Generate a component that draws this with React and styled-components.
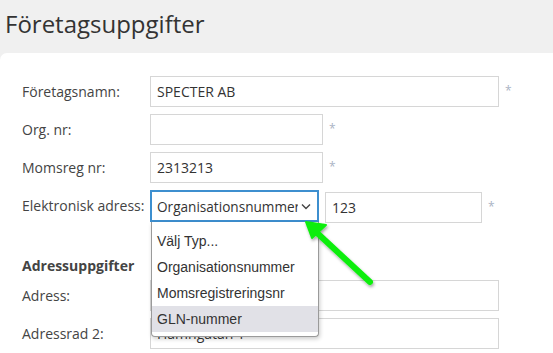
import React from 'react';
import styled, { createGlobalStyle } from 'styled-components';

const GlobalStyle = createGlobalStyle`
  html, body {
    margin: 0;
    padding: 0;
    background: #f0f0f0;
    font-family: "Open Sans", "Liberation Sans", sans-serif;
    overflow: hidden;
  }
`;

const Page = styled.div`
  width: 553px;
  height: 353px;
  overflow: hidden;
`;

const Title = styled.h1`
  margin: 0;
  height: 53px;
  padding: 7px 0 0 5px;
  box-sizing: border-box;
  font-size: 24px;
  font-weight: 400;
  line-height: 33px;
  color: #333;
`;

const Card = styled.section`
  position: relative;
  background: #fff;
  border-radius: 7px 0 0 0;
  padding: 23px 0 0 22px;
  height: 300px;
  box-sizing: border-box;
`;

const Row = styled.div`
  display: flex;
  align-items: ${(p) => (p.$top ? 'flex-start' : 'center')};
  margin-bottom: 7px;
`;

const Label = styled.label`
  width: 128px;
  flex: none;
  font-size: 14px;
  color: #444;
  line-height: 31px;
`;

const Input = styled.input`
  box-sizing: border-box;
  width: ${(p) => p.$w}px;
  height: 31px;
  margin-top: ${(p) => p.$mt || 0}px;
  margin-left: ${(p) => p.$ml || 0}px;
  border: 1px solid #d6d6d6;
  padding: 0 6px;
  font-family: "Open Sans", "Liberation Sans", sans-serif;
  font-size: 14px;
  color: #333;
  outline: none;
  background: #fff;
`;

const Star = styled.span`
  margin-left: 6px;
  font-size: 12px;
  color: #aab3c4;
  align-self: flex-start;
  margin-top: ${(p) => p.$mt || 6}px;
`;

const SelectWrap = styled.div`
  position: relative;
  width: 169px;
  flex: none;
`;

const SelectBox = styled.div`
  box-sizing: border-box;
  height: 32px;
  border: 2px solid #3d8fcf;
  display: flex;
  align-items: center;
  justify-content: space-between;
  padding: 0 6px 0 5px;
  font-size: 13.6px;
  color: #333;
  white-space: nowrap;
  overflow: hidden;

  span {
    overflow: hidden;
    flex: 1;
    margin-right: 3px;
  }
`;

const Menu = styled.ul`
  position: absolute;
  top: 100%;
  left: 1px;
  width: 168px;
  box-sizing: border-box;
  margin: 0;
  padding: 6px 0 4px;
  list-style: none;
  background: #fff;
  border: 1px solid #9a9a9a;
  border-top: none;
  border-radius: 0 0 4px 4px;
  box-shadow: 1px 2px 4px rgba(0, 0, 0, 0.2);
  z-index: 2;
`;

const Option = styled.li`
  height: 26px;
  line-height: 26px;
  padding-left: 5px;
  font-family: "Liberation Sans", Arial, sans-serif;
  font-size: 14px;
  color: #333;
  background: ${(p) => (p.$active ? '#e1e1e7' : 'transparent')};
`;

const SectionTitle = styled.h3`
  margin: 33px 0 4px;
  font-size: 14px;
  font-weight: 700;
  color: #444;
  line-height: 20px;
`;

const Arrow = styled.svg`
  position: absolute;
  left: 290px;
  top: 157px;
  z-index: 3;
  overflow: visible;
`;

const Chevron = () => (
  <svg width="10" height="7" viewBox="0 0 10 7">
    <path d="M1 1.5 L5 5.5 L9 1.5" fill="none" stroke="#444" strokeWidth="1.4" />
  </svg>
);

export default function App() {
  return (
    <Page>
      <GlobalStyle />
      <Title>Företagsuppgifter</Title>
      <Card>
        <Row>
          <Label>Företagsnamn:</Label>
          <Input $w={349} defaultValue="SPECTER AB" />
          <Star>*</Star>
        </Row>
        <Row>
          <Label>Org. nr:</Label>
          <Input $w={173} defaultValue="" />
          <Star>*</Star>
        </Row>
        <Row>
          <Label>Momsreg nr:</Label>
          <Input $w={173} defaultValue="2313213" />
          <Star>*</Star>
        </Row>
        <Row $top>
          <Label style={{ lineHeight: '32px' }}>Elektronisk adress:</Label>
          <SelectWrap>
            <SelectBox>
              <span>Organisationsnummer</span>
              <Chevron />
            </SelectBox>
            <Menu>
              <Option>Välj Typ...</Option>
              <Option>Organisationsnummer</Option>
              <Option>Momsregistreringsnr</Option>
              <Option $active>GLN-nummer</Option>
            </Menu>
          </SelectWrap>
          <Input $w={157} $mt={2} $ml={6} defaultValue="123" />
          <Star $mt={8}>*</Star>
        </Row>
        <SectionTitle>Adressuppgifter</SectionTitle>
        <Row>
          <Label>Adress:</Label>
          <Input $w={349} defaultValue="" />
        </Row>
        <Row>
          <Label>Adressrad 2:</Label>
          <Input $w={349} defaultValue="Hamngatan 1" />
        </Row>
        <Arrow width="90" height="80" viewBox="0 0 90 80">
          <defs>
            <filter id="sh" x="-20%" y="-20%" width="150%" height="150%">
              <feDropShadow dx="1" dy="2" stdDeviation="1.5" floodColor="#000" floodOpacity="0.35" />
            </filter>
          </defs>
          <g filter="url(#sh)">
            <line x1="80" y1="72" x2="25" y2="21" stroke="#11ee11" strokeWidth="6" strokeLinecap="round" />
            <polygon points="16,12 22,28 36,15" fill="#11ee11" stroke="#11ee11" strokeWidth="2" strokeLinejoin="round" />
          </g>
        </Arrow>
      </Card>
    </Page>
  );
}
